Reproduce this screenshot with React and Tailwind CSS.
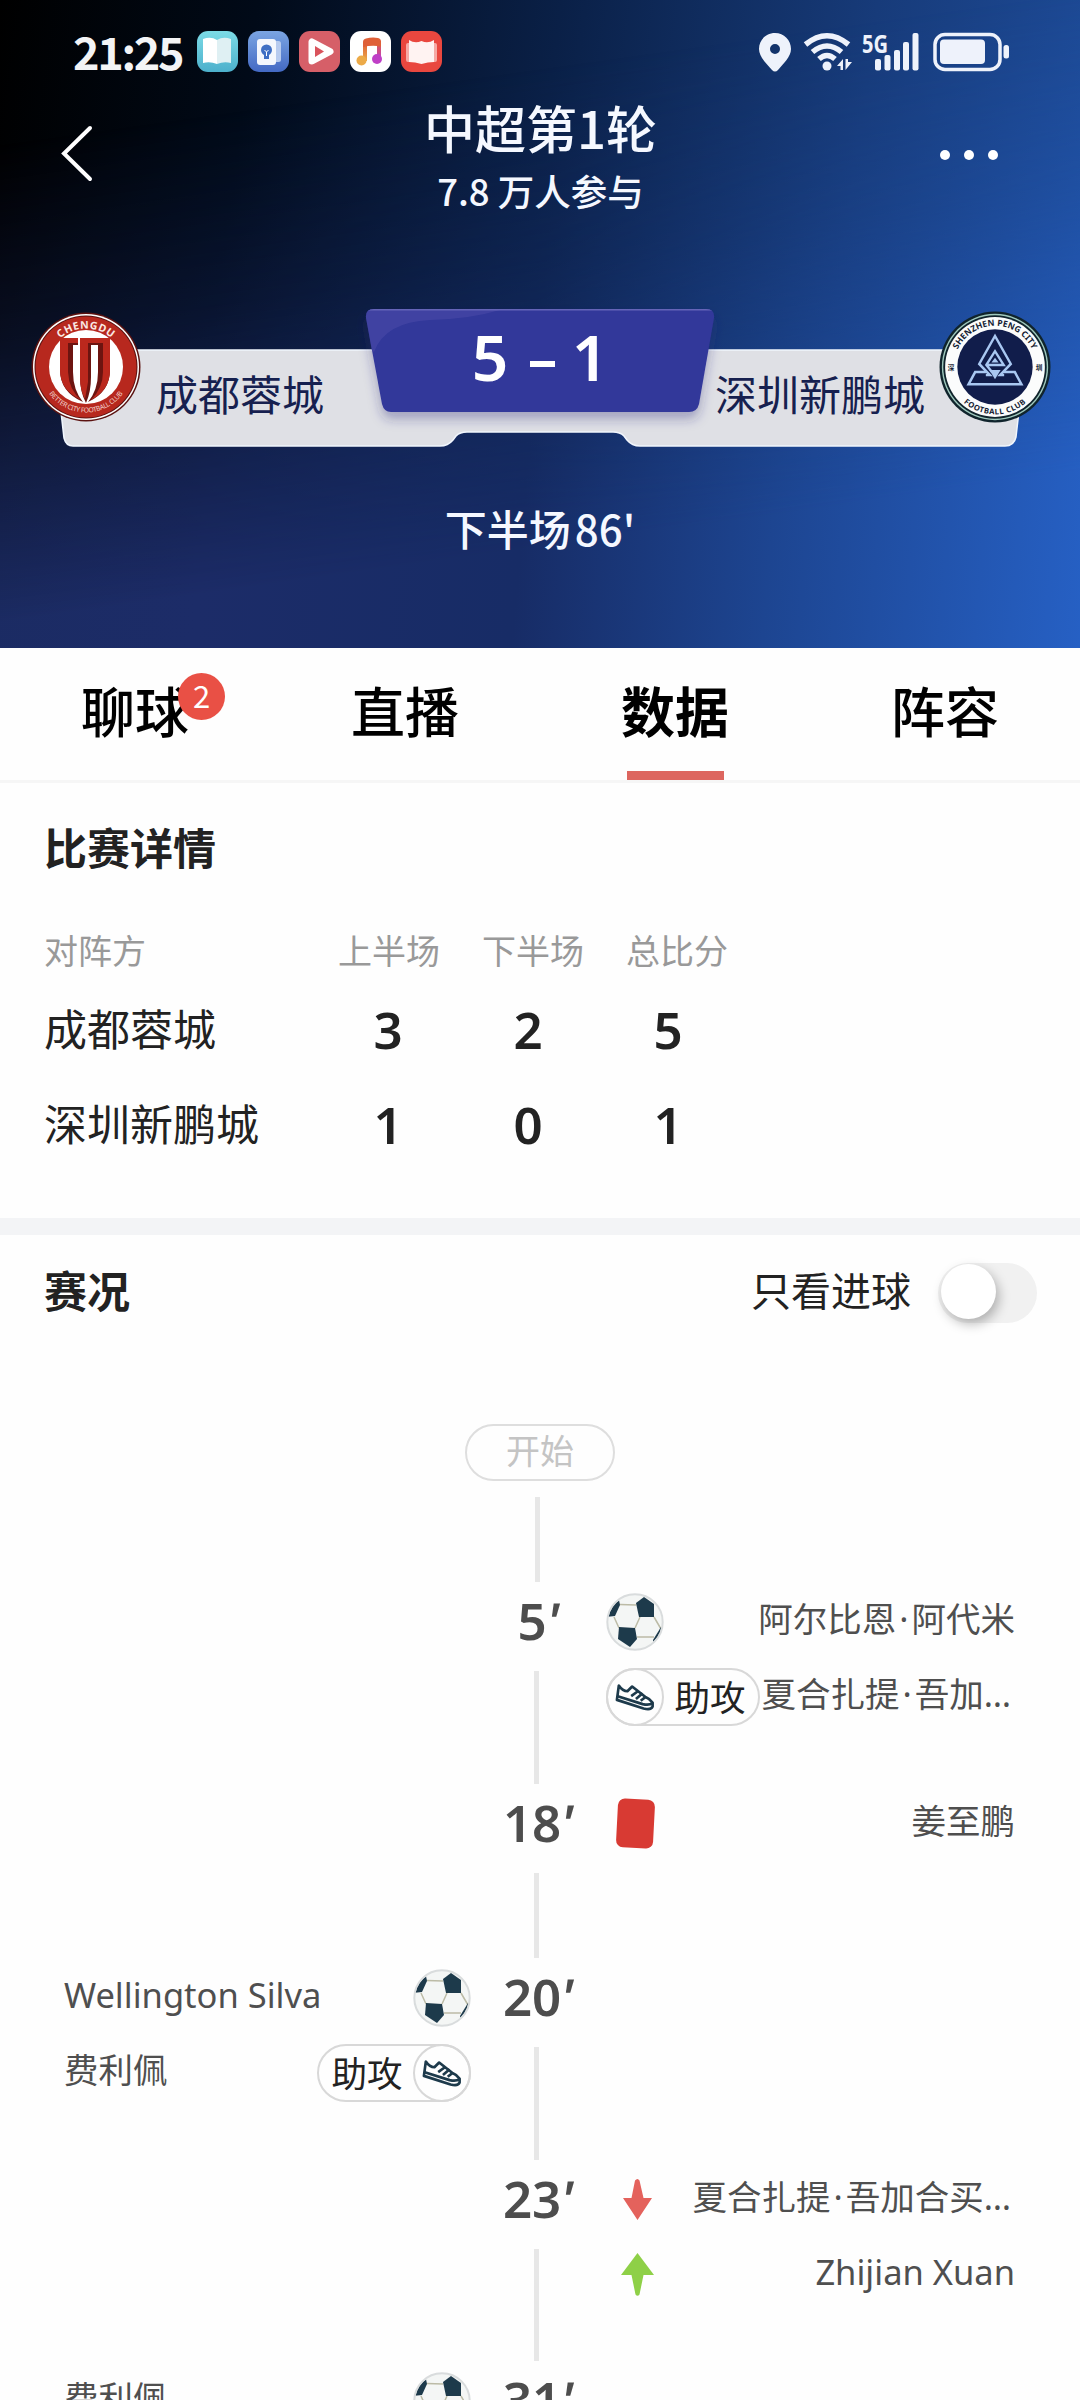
import React, { useState } from "react";

const TABS = [
  { id: "chat", label: "聊球", badge: 2 },
  { id: "live", label: "直播" },
  { id: "data", label: "数据" },
  { id: "lineup", label: "阵容" },
];

const SCORES = [
  { team: "成都蓉城", first: 3, second: 2, total: 5 },
  { team: "深圳新鹏城", first: 1, second: 0, total: 1 },
];

const EVENTS = [
  {
    minute: 5,
    side: "away",
    items: [
      { type: "goal", name: "阿尔比恩·阿代米" },
      { type: "assist", name: "夏合扎提·吾加…" },
    ],
  },
  { minute: 18, side: "away", items: [{ type: "red", name: "姜至鹏" }] },
  {
    minute: 20,
    side: "home",
    items: [
      { type: "goal", name: "Wellington Silva" },
      { type: "assist", name: "费利佩" },
    ],
  },
  {
    minute: 23,
    side: "away",
    items: [
      { type: "out", name: "夏合扎提·吾加合买…" },
      { type: "in", name: "Zhijian Xuan" },
    ],
  },
  { minute: 31, side: "home", items: [{ type: "goal", name: "费利佩" }] },
];

/* ---------- Status bar ---------- */

function AppIcons() {
  return (
    <div className="flex gap-[10px]">
      <svg className="h-[41px] w-[41px]" viewBox="0 0 41 41">
        <defs>
          <linearGradient id="reader" x1="0" y1="0" x2="0" y2="1">
            <stop offset="0" stopColor="#7cdbe6" />
            <stop offset="1" stopColor="#4cb0cc" />
          </linearGradient>
        </defs>
        <rect width="41" height="41" rx="11" fill="url(#reader)" />
        <path d="M6 32V8q8-3 14 1v24q-7-3-14-1z" fill="#fff" />
        <path d="M34 32V8q-8-3-14 1v24q7-3 14-1z" fill="#dff0f3" />
      </svg>
      <svg className="h-[41px] w-[41px]" viewBox="0 0 41 41">
        <defs>
          <linearGradient id="tips" x1="0" y1="0" x2="0" y2="1">
            <stop offset="0" stopColor="#7ba5e2" />
            <stop offset="1" stopColor="#4369c4" />
          </linearGradient>
        </defs>
        <rect width="41" height="41" rx="11" fill="url(#tips)" />
        <rect x="16" y="10" width="17" height="21" rx="2.500" fill="#b7cbef" />
        <rect x="9" y="8" width="19" height="26" rx="3" fill="#f4f7fd" />
        <circle cx="18.500" cy="19" r="5.500" fill="#3f6fc4" />
        <path d="M16 24h5v4h-5z" fill="#3f6fc4" />
        <path d="M16.500 19l2 2 2-2M18.500 21v4" stroke="#fff" strokeWidth="1" fill="none" />
      </svg>
      <svg className="h-[41px] w-[41px]" viewBox="0 0 41 41">
        <rect width="41" height="41" rx="11" fill="#d65f68" />
        <path
          d="M13 11v19l18-9.500z"
          fill="#d65f68"
          stroke="#fff"
          strokeWidth="7"
          strokeLinejoin="round"
        />
        <path d="M16 15v11l9-5.500z" fill="#d9535c" />
      </svg>
      <svg className="h-[41px] w-[41px]" viewBox="0 0 41 41">
        <defs>
          <linearGradient id="music" x1="0" y1="0" x2="0" y2="1">
            <stop offset="0" stopColor="#df6038" />
            <stop offset="1" stopColor="#ecaa48" />
          </linearGradient>
          <linearGradient id="music-right" x1="0" y1="0" x2="0" y2="1">
            <stop offset="0" stopColor="#df6038" />
            <stop offset="1" stopColor="#bf3fc6" />
          </linearGradient>
        </defs>
        <rect width="41" height="41" rx="11" fill="#fff" />
        <path d="M27 10h4v18h-4z" fill="url(#music-right)" />
        <path d="M13 12h4v18h-4z" fill="url(#music)" />
        <path d="M13 16V11q0-3 3-3.500 6-1.500 12-.5 3 .5 3 3.500v5q-9-1.500-18 .5z" fill="#df6038" />
        <circle cx="11.500" cy="29.500" r="5" fill="#ecaa48" />
        <circle cx="27" cy="28" r="5" fill="#bf3fc6" />
      </svg>
      <svg className="h-[41px] w-[41px]" viewBox="0 0 41 41">
        <rect width="41" height="41" rx="11" fill="#e9473f" />
        <rect x="5" y="12" width="31" height="19" rx="2" fill="#f6a9a5" />
        <path d="M8 9q6 4 12.500 1Q27 13 33 9v22q-6 0-12.500 2Q14 31 8 31z" fill="#fff3f2" />
      </svg>
    </div>
  );
}

function StatusBar() {
  return (
    <div className="flex h-[103px] items-center pl-[73px] pr-[71px]">
      <span className="-mt-[3px] w-[124px] text-[45px] leading-none font-bold tracking-[-2.300px] text-[#f3f4f6]">
        21:25
      </span>
      <AppIcons />
      <svg className="ml-auto h-[40px] w-[252px] overflow-visible" viewBox="757 31 252 40" fill="#eef2fb">
        <path
          fillRule="evenodd"
          d="M775 32c9 0 16 7 16 16 0 8-8 15-13 21q-3 3-6 0c-5-6-13-13-13-21 0-9 7-16 16-16zm0 11a5 5 0 1 0 0 10 5 5 0 0 0 0-10z"
        />
        <g fill="none" stroke="#eef2fb" strokeWidth="5.500">
          <path d="M805.500 43.500Q827 26 848.500 43.500" />
          <path d="M812.500 51Q827 39 841.500 51" />
          <path d="M819 58Q827 51 835 58" />
        </g>
        <circle cx="827" cy="65" r="4.500" />
        <path d="M837 65l6-7v11h-2.500v-4zM845.500 58h2.500v3h4l-6.500 8z" />
        <text x="862" y="51.500" fontSize="25" fontWeight="700" textLength="26" lengthAdjust="spacingAndGlyphs" fontFamily="Noto Sans, sans-serif">
          5G
        </text>
        <rect x="875" y="58" width="6" height="11.500" rx="2" />
        <rect x="884.500" y="54" width="6" height="15.500" rx="2" />
        <rect x="894" y="49" width="6" height="20.500" rx="2" />
        <rect x="903" y="41" width="6" height="28.500" rx="2" />
        <rect x="912.500" y="32" width="6" height="37.500" rx="2" />
        <rect x="935" y="33.500" width="65" height="35" rx="10" fill="none" stroke="#eef2fb" strokeWidth="3.500" />
        <rect x="940" y="38.500" width="45" height="24.500" rx="4" />
        <rect x="1003.500" y="44" width="5.500" height="13.500" rx="2.500" />
      </svg>
    </div>
  );
}

/* ---------- Club crests ---------- */

function ChengduCrest() {
  return (
    <svg className="h-[110px] w-[110px]" viewBox="0 0 110 110">
      <defs>
        <path id="cd-top" d="M16.500 55a38.500 38.500 0 0 1 77 0" />
        <path id="cd-bottom" d="M9.500 55a45.500 45.500 0 0 0 91 0" />
      </defs>
      <circle cx="55" cy="55" r="54.500" fill="#5b1210" />
      <circle cx="55" cy="55" r="53" fill="#fff" />
      <circle cx="55" cy="55" r="51.500" fill="#5b1210" />
      <circle cx="55" cy="55" r="50.500" fill="#b7281e" />
      <circle cx="55" cy="55" r="37" fill="#fff" />
      <path d="M29 26H47V33H42V60Q42 78 52 90 29 80 29 58Z" fill="#6d1410" />
      <path d="M29 26H47V31H37V60Q38 78 50 88 29 78 29 58Z" fill="#bb281d" />
      <path d="M49 26H79V58Q79 80 57 90 67 78 67 60V33H60V65Q60 80 55 91 49 80 49 65Z" fill="#6d1410" />
      <path d="M49 26H79V31H57V70L54 87Q49 78 49 66Z" fill="#bb281d" />
      <path d="M72 30H79V58Q79 78 60 88 72 76 72 60Z" fill="#bb281d" />
      <text fill="#fbe9e4" fontSize="10.500" fontWeight="700" fontFamily="Noto Sans, sans-serif" letterSpacing="0.600">
        <textPath href="#cd-top" startOffset="50%" textAnchor="middle">
          CHENGDU
        </textPath>
      </text>
      <text fill="#f3d5ce" fontSize="6.800" fontFamily="Noto Sans, sans-serif" textLength="86">
        <textPath href="#cd-bottom" startOffset="50%" textAnchor="middle">
          BETTER CITY FOOTBALL CLUB
        </textPath>
      </text>
    </svg>
  );
}

function ShenzhenCrest() {
  return (
    <svg className="h-[112px] w-[112px]" viewBox="0 0 110 110">
      <defs>
        <path id="sz-top" d="M14.500 55a40.500 40.500 0 0 1 81 0" />
        <path id="sz-bottom" d="M8.500 55a46.500 46.500 0 0 0 93 0" />
      </defs>
      <circle cx="55" cy="55" r="54.500" fill="#10242c" />
      <circle cx="55" cy="55" r="52.200" fill="#9fc9bd" />
      <circle cx="55" cy="55" r="50.800" fill="#10242c" />
      <circle cx="55" cy="55" r="49" fill="#fbfcfc" />
      <circle cx="55" cy="55" r="37" fill="#111d4b" />
      <g fill="none" stroke="#a9c8f2" strokeWidth="2.400">
        <path d="M46 63H50L39.500 52 55 24.500 70.500 52 60 63H64" />
        <path d="M52 60L46.500 53 55 39.500 63.500 53H48" />
        <path d="M47 60H35.500L29 72h52l-6.500-12H63" />
      </g>
      <path d="M49.500 58h11L55 67z" fill="#a9c8f2" />
      <path d="M55 46l3.500 4.500h-7z" fill="#a9c8f2" />
      <text fill="#151c33" fontSize="8.400" fontWeight="700" fontFamily="Noto Sans, sans-serif">
        <textPath href="#sz-top" startOffset="50%" textAnchor="middle">
          SHENZHEN PENG CITY
        </textPath>
      </text>
      <text fill="#151c33" fontSize="7.600" fontWeight="700" fontFamily="Noto Sans, sans-serif" letterSpacing="0.500">
        <textPath href="#sz-bottom" startOffset="50%" textAnchor="middle">
          FOOTBALL CLUB
        </textPath>
      </text>
      <g fill="#151c33" fontSize="6.500" fontWeight="700" fontFamily="Noto Sans CJK SC, sans-serif">
        <text x="8.500" y="58">深</text>
        <text x="95" y="58">圳</text>
      </g>
    </svg>
  );
}

/* ---------- Header ---------- */

function ScoreBanner() {
  return (
    <div className="relative mt-[66px] h-[166px]">
      <svg className="absolute inset-0 h-full w-full" viewBox="0 300 1080 166">
        <defs>
          <filter id="plate-shadow" x="-10%" y="-10%" width="120%" height="150%">
            <feDropShadow dx="0" dy="7" stdDeviation="6" floodColor="#2d2a7a" floodOpacity="0.350" />
          </filter>
          <clipPath id="plate">
            <path d="M374 309H706Q715 309 714 318L699 407Q698 416 690 416H391Q383 416 382 408L366 318Q365 309 374 309Z" />
          </clipPath>
        </defs>
        <path
          d="M54 350H1026L1016 437Q1014 446 1005 446H640Q632 446 627 440L624 436Q620 432 613 432H467Q460 432 456 436L453 440Q448 446 440 446H73Q66 446 64 438Z"
          fill="#dfe0e5"
          stroke="#f1f6fd"
          strokeWidth="1.500"
        />
        <g filter="url(#plate-shadow)">
          <path
            d="M374 309H706Q715 309 714 318L699 404Q697 412 689 412H391Q384 412 382 404L366 318Q365 309 374 309Z"
            fill="#32379a"
          />
        </g>
        <g clipPath="url(#plate)">
          <path d="M360 300H720V310H500Q470 319 430 320 385 322 374 352L360 340Z" fill="#5250ae" opacity="0.450" />
          <path d="M366 309.700H714" stroke="#6564b8" strokeWidth="1.500" />
        </g>
      </svg>
      <div className="relative flex h-full items-start justify-between pr-[29px] pl-[31px]">
        <div className="flex items-start pt-[12px]">
          <ChengduCrest />
          <span className="mt-[60px] ml-[15px] text-[42px] leading-none text-[#16204f]">成都蓉城</span>
        </div>
        <div className="absolute left-[366px] flex w-[348px] justify-center pt-[25px] font-['Noto_Sans',sans-serif] text-[64px] leading-none font-semibold text-white">
          <span className="w-[56px] text-center">5</span>
          <span className="mr-[7px] ml-[12px] mt-[36px] h-[6px] w-[25px] bg-white" />
          <span className="w-[56px] text-center">1</span>
        </div>
        <div className="flex items-start pt-[11px]">
          <span className="mt-[61px] mr-[14px] text-[42px] leading-none text-[#16204f]">深圳新鹏城</span>
          <ShenzhenCrest />
        </div>
      </div>
    </div>
  );
}

function MatchHeader() {
  return (
    <header className="relative h-[648px] overflow-hidden bg-[linear-gradient(98deg,#000_0%,#010a18_22%,#0a2047_48%,#173b7a_75%,#1f4f9f_100%)] text-[#f5f8ff]">
      <div className="absolute inset-0 bg-[linear-gradient(95deg,#1b2b62_0%,#1c2c68_22%,#172c66_50%,#1d4591_72%,#2660c4_100%)] [mask-image:linear-gradient(172deg,transparent_18%,rgba(0,0,0,0.3)_42%,#000_78%)]" />
      <div className="relative">
        <StatusBar />
        <div className="flex h-[131px] items-start justify-between pr-[82px] pl-[61px]">
          <svg className="mt-[22px] h-[57px] w-[80px]" viewBox="0 0 80 57" fill="none">
            <path d="M29 3L3 28.500 29 54" stroke="#fff" strokeWidth="4" strokeLinecap="round" />
          </svg>
          <div className="flex flex-col items-center">
            <h1 className="-mt-[2px] text-[51px] leading-[52px] font-medium">中超第1轮</h1>
            <p className="mt-[18px] text-[36.500px] leading-[40px] font-medium">7.8 万人参与</p>
          </div>
          <div className="mt-[47px] flex gap-[14px]">
            <span className="h-[10px] w-[10px] rounded-full bg-white" />
            <span className="h-[10px] w-[10px] rounded-full bg-white" />
            <span className="h-[10px] w-[10px] rounded-full bg-white" />
          </div>
        </div>
        <ScoreBanner />
        <p className="mt-[40px] text-center text-[42px] leading-[44px] font-medium">
          下半场<span className="ml-[4px]">86'</span>
        </p>
      </div>
    </header>
  );
}

/* ---------- Tabs and score table ---------- */

function Tabs({ active, onChange }) {
  return (
    <nav className="grid h-[135px] grid-cols-4 border-b-[3px] border-[#f6f6f6]">
      {TABS.map((tab) => (
        <button
          key={tab.id}
          onClick={() => onChange(tab.id)}
          className="flex flex-col items-center justify-between pt-[32px]"
        >
          <span
            className={`relative text-[54px] leading-[60px] text-black ${
              tab.id === active ? "font-bold" : "font-medium"
            }`}
          >
            {tab.label}
            {tab.badge && (
              <span className="absolute -top-[7px] left-[97px] flex h-[47px] w-[47px] items-center justify-center rounded-full bg-[#e95045] text-[31px] leading-none font-normal text-white">
                <span className="-mt-[4px]">{tab.badge}</span>
              </span>
            )}
          </span>
          {tab.id === active && <span className="h-[9px] w-[97px] bg-[#dd665f]" />}
        </button>
      ))}
    </nav>
  );
}

function ScoreTable() {
  return (
    <section className="h-[435px] px-[44px] pt-[41px] text-[#222]">
      <h2 className="text-[43px] leading-[44px] font-bold">比赛详情</h2>
      <div className="mt-[62px] grid grid-cols-[274px_140px_144px_160px] items-center text-[34px] leading-[40px] whitespace-nowrap text-[#999]">
        <span>对阵方</span>
        <span className="pl-[20px]">上半场</span>
        <span className="pl-[24px]">下半场</span>
        <span className="pl-[24px]">总比分</span>
      </div>
      {SCORES.map((row) => (
        <div
          key={row.team}
          className="grid h-[95px] grid-cols-[274px_140px_140px_140px] items-center pt-[19px] text-[43px] leading-[44px]"
        >
          <span>{row.team}</span>
          <span className="mt-[4px] text-center font-['Noto_Sans',sans-serif] text-[51px] font-semibold">
            {row.first}
          </span>
          <span className="mt-[4px] text-center font-['Noto_Sans',sans-serif] text-[51px] font-semibold">
            {row.second}
          </span>
          <span className="mt-[4px] text-center font-['Noto_Sans',sans-serif] text-[51px] font-semibold">
            {row.total}
          </span>
        </div>
      ))}
    </section>
  );
}

/* ---------- Timeline ---------- */

function Ball() {
  return (
    <svg className="h-[58px] w-[58px] shrink-0" viewBox="0 0 58 58">
      <defs>
        <clipPath id="ball">
          <circle cx="29" cy="29" r="27" />
        </clipPath>
      </defs>
      <circle cx="29" cy="29" r="27.500" fill="#f4f6f5" />
      <g clipPath="url(#ball)">
        <path
          d="M14 11.500L30 12M8 24l5 11M34 24l-5 11M31 44H48M48 24l7 12"
          stroke="#bcbba6"
          strokeWidth="1.500"
          fill="none"
        />
        <g fill="#1d3a4b">
          <path d="M30 10L38 4 48 11 48 24 33 24Z" />
          <path d="M13 34L29 35 31 46 24 54 12 46Z" />
          <path d="M0 24L5 10 13 7 14 12 9 23Z" />
          <path d="M47 47L55 34 58 38 55 50 48 52Z" />
        </g>
      </g>
      <circle cx="29" cy="29" r="27.700" fill="none" stroke="#d9dcdd" strokeWidth="2" />
    </svg>
  );
}

function AssistBadge({ flip }) {
  return (
    <div
      className={`flex h-[58px] w-[154px] shrink-0 items-center rounded-full border-2 border-[#d8d8d8] ${
        flip ? "flex-row-reverse" : ""
      }`}
    >
      <span className="-m-[2px] flex h-[58px] w-[58px] shrink-0 items-center justify-center rounded-full border-2 border-[#d8d8d8]">
        <svg className="h-[28px] w-[40px]" viewBox="0 0 42 28" fill="none" stroke="#1d3a4b" strokeWidth="2.800" strokeLinejoin="round">
          <path d="M4 2L2 17 30 26Q38 28 39.500 24V20Q37 16 32 14L18 3 13 8Q8 8 4 2Z" />
          <path d="M2 13L29 21.500Q36 23 39.500 20.500M17 13l7-5M22 16l7-6M27 18l5-4" />
        </svg>
      </span>
      <span className="-mt-[2px] flex-1 text-center text-[35.500px] leading-none text-[#222]">助攻</span>
    </div>
  );
}

function EventIcon({ type, side }) {
  switch (type) {
    case "goal":
      return <Ball />;
    case "assist":
      return <AssistBadge flip={side === "home"} />;
    case "red":
      return (
        <span className="ml-[11px] h-[49px] w-[37px] shrink-0 rotate-[3deg] rounded-[7px] bg-[#d83a33]" />
      );
    case "out":
      return (
        <svg className="ml-[16px] h-[41px] w-[31px] shrink-0" viewBox="0 0 31 41" fill="#e4625c">
          <path d="M13 1.500Q15.500-1.500 17.500 1.500L21.500 19H30L15.500 41 1 19H9.500Z" />
        </svg>
      );
    default:
      return (
        <svg className="ml-[15px] h-[43px] w-[33px] shrink-0" viewBox="0 0 33 43" fill="#8ed047">
          <path d="M16.500 0L33 22H22.500L18.500 41.500Q16.500 44 14.500 41.500L10.500 22H0Z" />
        </svg>
      );
  }
}

function PlayerName({ name }) {
  const [first, last] = name.split("·");
  return (
    <span
      className={`-mt-[6px] font-['Noto_Sans','Noto_Sans_CJK_SC',sans-serif] text-[34.500px] leading-[44px] whitespace-nowrap text-[#4f4f4f] ${
        name.endsWith("…") ? "mr-[4px]" : ""
      }`}
    >
      {first}
      {last && <span className="mx-[3px]">·</span>}
      {last}
    </span>
  );
}

function EventItems({ items, side }) {
  return (
    <div className="flex flex-col gap-[17px] pt-[11px]">
      {items.map((item) => (
        <div
          key={item.name}
          className={`flex h-[58px] items-center justify-between ${
            side === "home" ? "flex-row-reverse" : ""
          }`}
        >
          <EventIcon type={item.type} side={side} />
          <PlayerName name={item.name} />
        </div>
      ))}
    </div>
  );
}

function TimelineRow({ event }) {
  const { minute, side, items } = event;
  return (
    <li className="grid grid-cols-[407px_135px_409px] justify-start">
      <div>{side === "home" && <EventItems items={items} side={side} />}</div>
      <div className={`flex flex-col items-center ${items.length > 1 ? "h-[201.500px]" : "h-[174.500px]"}`}>
        <span className="flex h-[89px] shrink-0 items-center pb-[12px] font-['Noto_Sans',sans-serif] text-[51px] leading-none font-semibold text-[#4d4d4d]">
          {minute}
          <span className="-skew-x-12">'</span>
        </span>
        <span className="mr-[4px] w-[5px] flex-1 bg-[#e7e7e7]" />
      </div>
      <div>{side === "away" && <EventItems items={items} side={side} />}</div>
    </li>
  );
}

function Timeline() {
  const [goalsOnly, setGoalsOnly] = useState(false);
  const events = goalsOnly
    ? EVENTS.filter((e) => e.items.some((i) => i.type === "goal"))
    : EVENTS;

  return (
    <section>
      <div className="flex h-[112px] items-center justify-between pr-[43px] pl-[44px]">
        <h2 className="-mt-[4px] text-[43px] leading-[44px] font-bold text-[#222]">赛况</h2>
        <div className="flex items-center">
          <span className="-mt-[5px] mr-[27px] text-[40px] leading-[44px] text-[#222]">只看进球</span>
          <button
            onClick={() => setGoalsOnly(!goalsOnly)}
            className={`mt-[4px] flex h-[60px] w-[99px] items-center rounded-full bg-[#f1f1f1] px-[3px] ${
              goalsOnly ? "justify-end" : ""
            }`}
          >
            <span className="-mt-[4px] h-[55px] w-[55px] rounded-full bg-white shadow-[3px_5px_12px_rgba(0,0,0,0.28)]" />
          </button>
        </div>
      </div>
      <div className="flex flex-col items-center pt-[77px]">
        <span className="flex h-[57px] w-[150px] items-center justify-center rounded-full border-2 border-[#dedede] text-[34px] leading-none text-[#c4c4c4]">
          <span className="-mt-[6px]">开始</span>
        </span>
        <span className="mt-[16px] mr-[5px] h-[85px] w-[5px] bg-[#e7e7e7]" />
      </div>
      <ul className="pl-[64px]">
        {events.map((event) => (
          <TimelineRow key={event.minute} event={event} />
        ))}
      </ul>
    </section>
  );
}

export default function App() {
  const [tab, setTab] = useState("data");

  return (
    <div className="h-[2400px] w-[1080px] overflow-hidden bg-[#fefefe] font-['Noto_Sans_CJK_SC',sans-serif]">
      <MatchHeader />
      <Tabs active={tab} onChange={setTab} />
      <ScoreTable />
      <div className="h-[17px] bg-[#f3f4f6]" />
      <Timeline />
    </div>
  );
}
